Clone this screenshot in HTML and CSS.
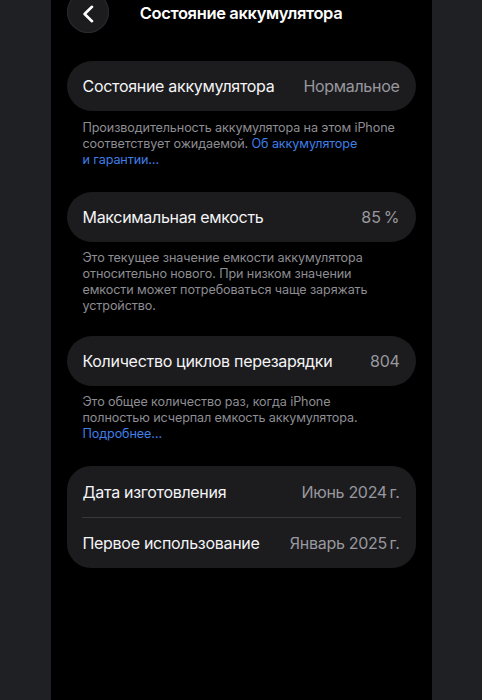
FILE: index.html
```html
<!DOCTYPE html>
<html lang="ru">
<head>
<meta charset="utf-8">
<title>Состояние аккумулятора</title>
<link rel="stylesheet" href="styles.css">
</head>
<body>
<div class="screen">
  <header class="nav">
    <div class="back">
      <svg width="14" height="18" viewBox="0 0 14 18"><path d="M11 1.8 L3.6 9 L11 16.2" fill="none" stroke="#fff" stroke-width="2.6" stroke-linecap="round" stroke-linejoin="round"/></svg>
    </div>
    <h1 class="title">Состояние аккумулятора</h1>
    <div></div>
  </header>

  <div class="card first">
    <div class="row"><span class="label">Состояние аккумулятора</span><span class="value">Нормальное</span></div>
  </div>
  <p class="note n1">Производительность аккумулятора на этом iPhone<br>соответствует ожидаемой. <span class="link">Об аккумуляторе<br>и гарантии…</span></p>

  <div class="card">
    <div class="row"><span class="label">Максимальная емкость</span><span class="value">85&#8239;%</span></div>
  </div>
  <p class="note n2">Это текущее значение емкости аккумулятора<br>относительно нового. При низком значении<br>емкости может потребоваться чаще заряжать<br>устройство.</p>

  <div class="card">
    <div class="row"><span class="label">Количество циклов перезарядки</span><span class="value">804</span></div>
  </div>
  <p class="note n3">Это общее количество раз, когда iPhone<br>полностью исчерпал емкость аккумулятора.<br><span class="link">Подробнее…</span></p>

  <div class="card group">
    <div class="row"><span class="label">Дата изготовления</span><span class="value">Июнь 2024&#8201;г.</span></div>
    <div class="divider"></div>
    <div class="row"><span class="label">Первое использование</span><span class="value">Январь 2025&#8201;г.</span></div>
  </div>
</div>
</body>
</html>
```

FILE: styles.css
```css
html, body {
  margin: 0;
  padding: 0;
  background: #1f2024;
  height: 700px;
  overflow: hidden;
}
.screen {
  width: 381px;
  height: 700px;
  margin: 0 auto;
  background: #000;
  font-family: Inter, "Noto Sans", sans-serif;
  color: #fff;
  overflow: hidden;
}
.nav {
  display: grid;
  grid-template-columns: 1fr auto 1fr;
  align-items: center;
  height: 42px;
  margin-top: -9px;
  padding: 0 16px;
}
.back {
  width: 42px;
  height: 42px;
  border-radius: 50%;
  background: #1c1c1e;
  box-shadow: inset 0 0 0 1px #2c2c2f;
  display: flex;
  align-items: center;
  justify-content: center;
  padding-top: 4px;
  box-sizing: border-box;
}
.title {
  margin: 0;
  padding-top: 1px;
  font-size: 16.5px;
  font-weight: 600;
  letter-spacing: -0.35px;
}
.card {
  margin: 0 16px;
  background: #1c1c1e;
  border-radius: 25px;
  padding: 0 16px;
}
.card.first {
  margin-top: 28px;
}
.card.group {
  border-radius: 24px;
}
.row {
  height: 50px;
  display: flex;
  align-items: center;
  justify-content: space-between;
  font-size: 16px;
  letter-spacing: -0.3px;
  color: #f4f4f6;
}
.group .row:first-child {
  height: 51px;
}
.value {
  color: #98989e;
}
.divider {
  height: 1px;
  background: #38383a;
  margin: 0 -1px;
}
.note {
  margin: 0 0 24px;
  padding: 8px 32px 0;
  font-size: 12.6px;
  line-height: 16px;
  color: #8d8d93;
  letter-spacing: -0.1px;
  white-space: nowrap;
}
.note.n1 {
  padding-top: 9px;
}
.note.n2 {
  margin-bottom: 22px;
}
.link {
  color: #3f7fe8;
}
```
